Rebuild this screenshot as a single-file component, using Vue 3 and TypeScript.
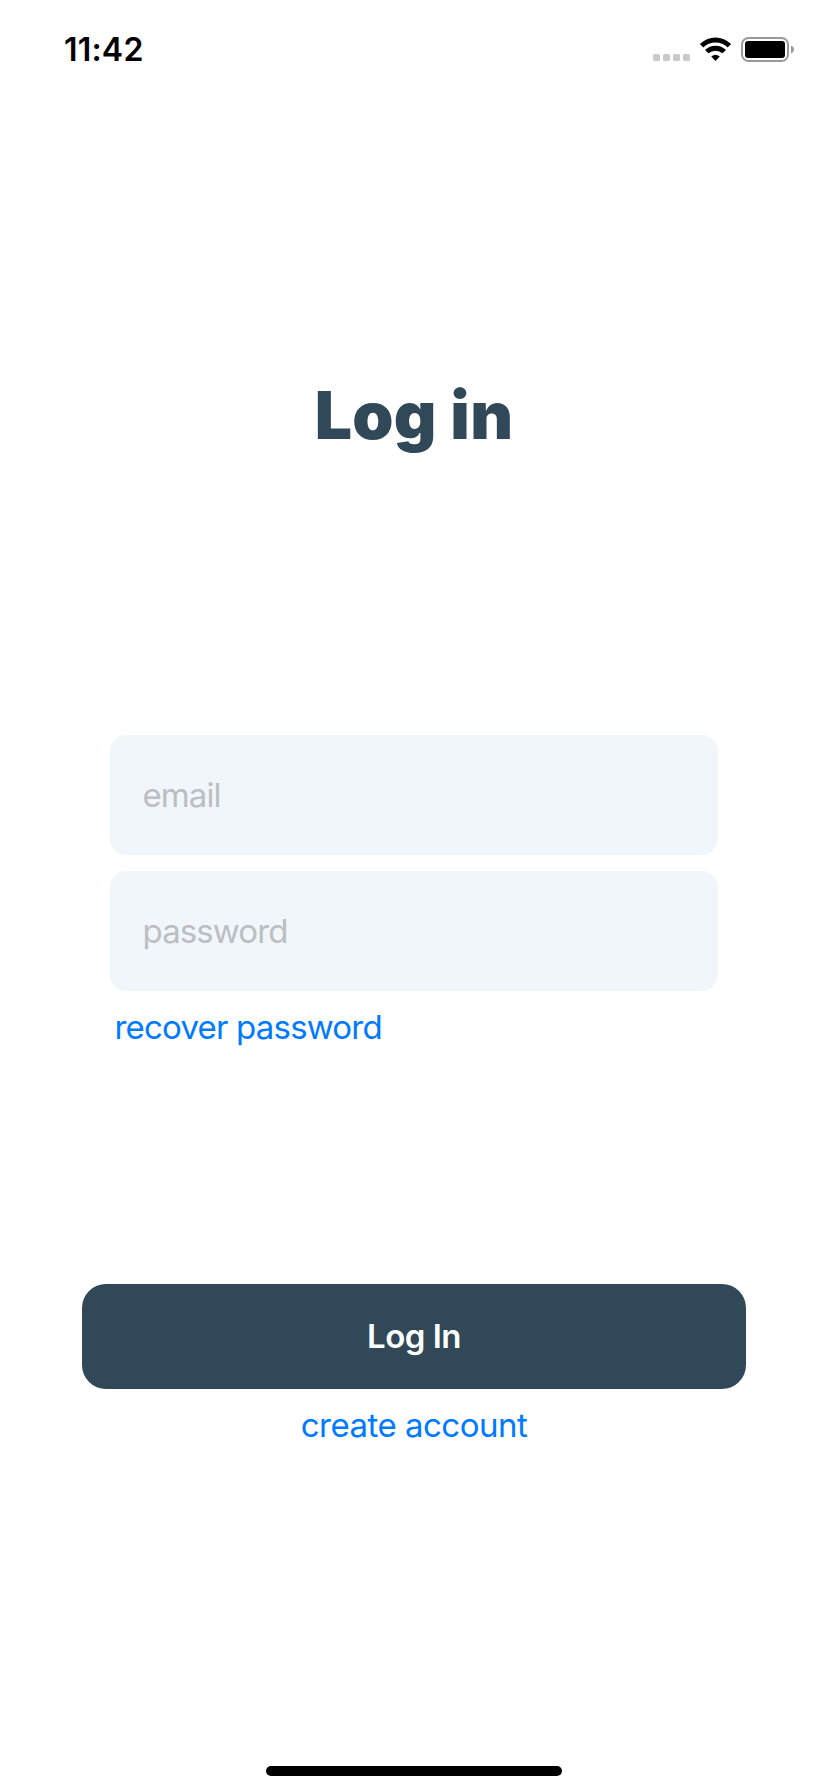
<script setup lang="ts">
import { ref } from 'vue'

const email = ref('')
const password = ref('')
const time = '11:42'
const signalDots = [0, 10, 20, 30]
</script>

<template>
  <main class="screen">
    <header class="status-bar">
      <span class="time">{{ time }}</span>
      <svg class="status-icons" viewBox="0 0 142 30" aria-hidden="true">
        <rect v-for="x in signalDots" :key="x" :x="x" y="19" width="7" height="7" rx="1.6" fill="#cacaca" />
        <g transform="translate(62.5 0)">
          <path d="M-15.6 9.1A21.5 21.5 0 0 1 15.6 9.1L12.2 12.4A17.4 17.4 0 0 0-12.2 12.4Z" />
          <path d="M-10.5 15.1A15 15 0 0 1 10.5 15.1L7 18.3A10.5 10.5 0 0 0-7 18.3Z" />
          <path d="M-4.3 21.4Q0 18 4.3 21.4L0 26Z" />
        </g>
        <rect x="89" y="3" width="46" height="23" rx="6.5" fill="none" stroke="#999" stroke-width="2" />
        <rect x="92" y="6" width="40" height="17" rx="3" />
        <path d="M138 10.5C142 12 142 17 138 18.5Z" fill="#999" />
      </svg>
    </header>

    <h1 class="title">Log in</h1>

    <form class="form" @submit.prevent>
      <div class="fields">
        <input v-model="email" class="field" type="email" placeholder="email" />
        <input v-model="password" class="field" type="password" placeholder="password" />
        <a class="link recover">recover password</a>
      </div>
      <button class="submit" type="submit">Log In</button>
      <a class="link create">create account</a>
    </form>

    <div class="home-indicator"></div>
  </main>
</template>

<style>
body {
  margin: 0;
  background: #fff;
}
</style>

<style scoped>
.screen {
  box-sizing: border-box;
  display: flex;
  flex-direction: column;
  align-items: center;
  width: 828px;
  height: 1792px;
  padding-bottom: 16px;
  background: #fff;
  color: #000;
  font-family: Inter, 'Liberation Sans', sans-serif;
}

.status-bar {
  box-sizing: border-box;
  display: flex;
  align-items: center;
  justify-content: space-between;
  width: 100%;
  height: 100px;
  padding: 0 33px 0 64px;
}

.time {
  font-size: 32px;
  font-weight: 600;
  line-height: 40px;
  letter-spacing: 0.2px;
}

.status-icons {
  width: 142px;
  height: 30px;
}

.title {
  margin: 275px 0 0;
  color: #304858;
  font-size: 66px;
  font-weight: 900;
  line-height: 80px;
  letter-spacing: 0.3px;
}

.form {
  display: flex;
  flex-direction: column;
  align-items: center;
  margin-top: 280px;
}

.fields {
  display: flex;
  flex-direction: column;
  gap: 16px;
  width: 608px;
}

.field {
  box-sizing: border-box;
  height: 120px;
  padding: 0 32.5px;
  border: 0;
  border-radius: 16px;
  outline: 0;
  background: #f1f6fa;
  font: 400 33px Inter, 'Liberation Sans', sans-serif;
  letter-spacing: -0.9px;
}

.field::placeholder {
  color: #bbbec2;
  opacity: 1;
}

.link {
  color: #007aff;
  font-size: 33px;
  line-height: 40px;
  letter-spacing: -0.5px;
}

.recover {
  align-self: flex-start;
  margin-left: 4.5px;
  letter-spacing: -0.8px;
}

.submit {
  width: 664px;
  height: 105px;
  margin-top: 237px;
  padding: 0 0 2px;
  border: 0;
  border-radius: 24px;
  background: #304858;
  color: #fff;
  font: 600 33px Inter, 'Liberation Sans', sans-serif;
  letter-spacing: -0.5px;
}

.create {
  margin-top: 16px;
}

.home-indicator {
  width: 296px;
  height: 10px;
  margin-top: auto;
  border-radius: 5px;
  background: #000;
}
</style>
